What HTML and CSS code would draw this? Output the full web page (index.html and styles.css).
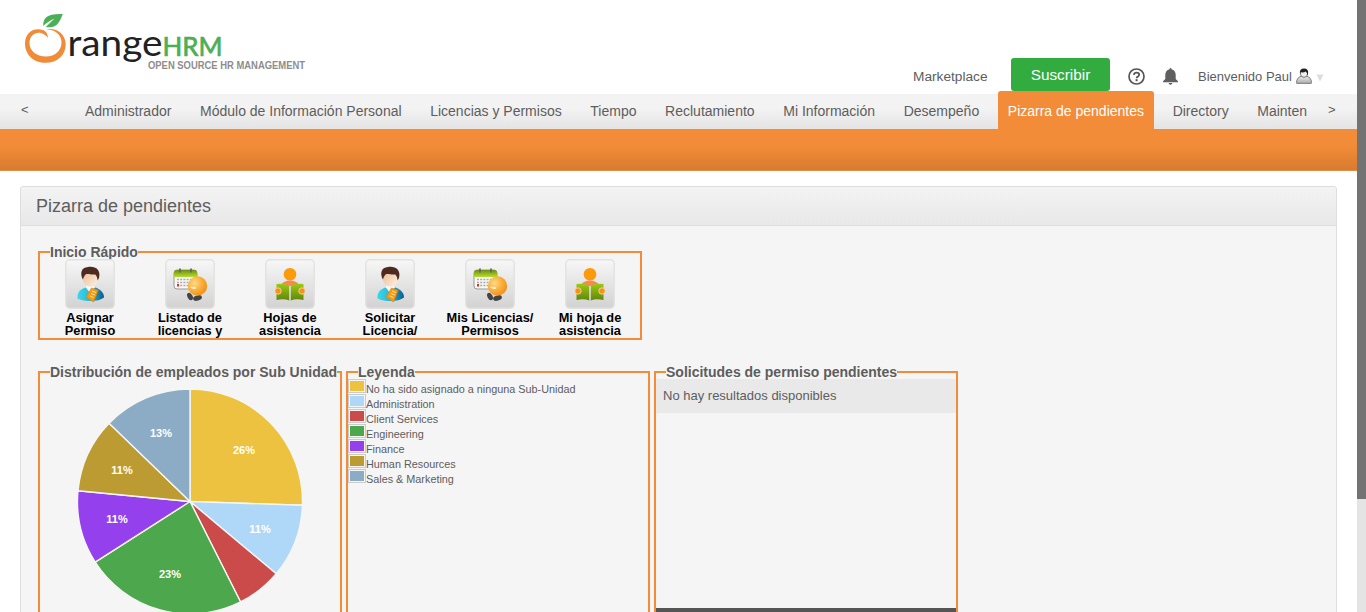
FILE: index.html
```html
<!DOCTYPE html>
<html lang="es">
<head>
<meta charset="utf-8">
<title>OrangeHRM</title>
<link rel="stylesheet" href="styles.css">
</head>
<body>
<svg width="0" height="0" class="defs" aria-hidden="true">
  <defs>
    <linearGradient id="tile" x1="0" y1="0" x2="0" y2="1"><stop offset="0" stop-color="#f7f7f7"/><stop offset="1" stop-color="#d2d2d2"/></linearGradient>
    <radialGradient id="ball" cx=".35" cy=".35" r=".75"><stop offset="0" stop-color="#ffd98c"/><stop offset=".5" stop-color="#fbb03b"/><stop offset="1" stop-color="#ee8a13"/></radialGradient>
    <linearGradient id="cal" x1="0" y1="0" x2="0" y2="1"><stop offset="0" stop-color="#6f8d10"/><stop offset="1" stop-color="#b5df2c"/></linearGradient>
    <linearGradient id="book" x1="0" y1="0" x2="0" y2="1"><stop offset="0" stop-color="#9cc914"/><stop offset="1" stop-color="#62850c"/></linearGradient>
    <linearGradient id="face" x1="0" y1="0" x2="1" y2="1"><stop offset="0" stop-color="#e9b58c"/><stop offset="1" stop-color="#fff3e6"/></linearGradient>
    <linearGradient id="shirt" x1="0" y1="0" x2="1" y2="0"><stop offset="0" stop-color="#38d8ec"/><stop offset=".5" stop-color="#2bb5d8"/><stop offset="1" stop-color="#0b5a8c"/></linearGradient>
    <linearGradient id="silver" x1="0" y1="0" x2="0" y2="1"><stop offset="0" stop-color="#eee"/><stop offset="1" stop-color="#aaa"/></linearGradient>
    <symbol id="i-person" viewBox="0 0 50 50">
      <rect x=".8" y=".8" width="48.4" height="48.4" rx="4" fill="url(#tile)" stroke="#e2e2dd" stroke-width="1.4"/>
      <path d="M12.500 39.500c-.5-6 2.500-9 8-11l10 0c5 2 8.500 5 8.500 10-3 2.500-8 3.500-13 3.500s-10-.5-13.500-2.500z" fill="url(#shirt)"/>
      <path d="M20.500 28l4.500 6 5-5.500-2.500-3h-5z" fill="#f4fafc"/>
      <ellipse cx="25.500" cy="19" rx="7.800" ry="8.800" fill="url(#face)"/>
      <path d="M17.800 20.500c-3-6-1.800-12 5.200-12.500 7-1.200 13.200 2.500 11 11l-1.400 2.500c-.3-3-.8-4.500-2.300-6-3.500.5-7-1-9-.500-1.500 1-2.300 2.500-3.500 5.500z" fill="#4e2a20"/>
      <path d="M26.500 29l6.800 2.300-4.800 11.700-7.500-5z" fill="#f59b12" stroke="#d97a0a" stroke-width=".6"/>
      <path d="M27 32l4 1.600m-5 .8l4 1.700m-5 .8l3.500 1.800" stroke="#ffe2a0" stroke-width="1"/>
    </symbol>
    <symbol id="i-calendar" viewBox="0 0 50 50">
      <rect x=".8" y=".8" width="48.400" height="48.400" rx="4" fill="url(#tile)" stroke="#e2e2dd" stroke-width="1.400"/>
      <rect x="9" y="11" width="23" height="19" rx="3" fill="#f8f8f6" stroke="#999" stroke-width="1"/>
      <path d="M9 18v-4q0-3 3-3h17q3 0 3 3v4z" fill="url(#cal)"/>
      <path d="M15 9.500v4m11-4v4" stroke="#666" stroke-width="1.800"/>
      <path d="M12 20.500h18M12 23.500h18M12 26.500h18" stroke="#aaa" stroke-width="1.700" stroke-dasharray="2 1.200"/>
      <rect x="12" y="25" width="2" height="2.500" fill="#d33"/>
      <ellipse cx="25" cy="37.500" rx="2.500" ry="4" transform="rotate(-28 25 37.500)" fill="#444"/>
      <ellipse cx="32.500" cy="39" rx="4.500" ry="2.600" transform="rotate(-15 32.500 39)" fill="#444"/>
      <circle cx="32.500" cy="27" r="9.700" fill="url(#ball)"/>
      <path d="M25 28q3 3 6 1.500l-.5-2q-2 1-5 0z" fill="#fff0cf"/>
    </symbol>
    <symbol id="i-reader" viewBox="0 0 50 50">
      <rect x=".8" y=".8" width="48.400" height="48.400" rx="4" fill="url(#tile)" stroke="#e2e2dd" stroke-width="1.400"/>
      <circle cx="25" cy="15.200" r="6.300" fill="#fb9b0c"/>
      <path d="M16.500 25q3-3.500 8.500-3.500t8.500 3.500l-8.500 2z" fill="#f58a4b"/>
      <path d="M11.500 25q7.500-1 12.700 1.500v15q-5-2-12.700-.5zM38.500 25q-7.500-1-12.700 1.500v15q5-2 12.700-.5z" fill="url(#book)"/>
      <circle cx="13" cy="32" r="3.200" fill="#fa930b" stroke="#e9e9e9" stroke-width=".7"/>
      <circle cx="37" cy="32" r="3.200" fill="#fa930b" stroke="#e9e9e9" stroke-width=".7"/>
    </symbol>
  </defs>
</svg>
<div class="viewport">
  <div class="page">
    <header class="branding">
      <svg class="logo" width="300" height="70" viewBox="20 10 300 70">
        <path d="M43 30C33 27 25 33 25 43.500C25 55 34 62.800 45.500 62.800C57.500 62.800 65.700 55 65.700 44.500C65.700 34 57 27.500 46.500 29.200C56 30 61.500 35 61.500 42.500C61.500 50.500 55 56.500 46 56.500C36.500 56.500 29.500 51 29.500 43C29.500 35 36 31.500 41 33C44.500 34.200 46.500 36 48 38C47.800 34 46.500 31.500 43 30Z" fill="#f28b38"/>
        <path d="M43.200 26C43.200 17.500 47 13.500 62.800 14C60 21 57.500 27.500 49 27.300Q47 27.300 45.800 27L54.500 18.500Q47 22 43.200 26Z" fill="#4caf55"/>
        <text class="logo-range" x="67.500" y="56" textLength="95" lengthAdjust="spacingAndGlyphs">range</text>
        <text class="logo-hrm" x="162.500" y="56" textLength="60" lengthAdjust="spacingAndGlyphs">HRM</text>
        <text class="logo-tag" x="148" y="68.800" textLength="157" lengthAdjust="spacingAndGlyphs">OPEN SOURCE HR MANAGEMENT</text>
      </svg>
      <div class="tools">
        <a class="market">Marketplace</a>
        <a class="subscribe">Suscribir</a>
        <svg class="help" width="17" height="17" viewBox="0 0 17 17"><circle cx="8.500" cy="8.500" r="7.500" fill="none" stroke="#555" stroke-width="1.700"/><path d="M5.900 6.900q.2-2.300 2.700-2.300t2.600 2q0 1.200-1.300 2-1.300.6-1.300 1.600" fill="none" stroke="#555" stroke-width="1.800"/><rect x="7.600" y="11.200" width="2" height="2" fill="#555"/></svg>
        <svg class="bell" width="15" height="17" viewBox="0 0 15 17"><path d="M7.500 0q1 0 1 1.200Q12.700 2.200 12.700 7v4L15 13.300v.9H0v-.9L2.300 11V7Q2.300 2.200 6.500 1.200 6.500 0 7.500 0zM5.500 15h4q-.4 1.800-2 1.800T5.500 15z" fill="#606060"/></svg>
        <a class="welcome">Bienvenido Paul</a>
        <svg class="user" width="16" height="16" viewBox="0 0 16 16"><path d="M.7 15.400v-2.900Q1.500 9.300 5.500 8h5q4 1.300 4.800 4.500v2.900z" fill="url(#silver)" stroke="#777" stroke-width=".9"/><circle cx="8" cy="5.700" r="3.600" fill="#eee" stroke="#555" stroke-width=".8"/><path d="M4 6Q3 .5 8 .5t4 5.500l-.6 1.500q0-3-1.700-4Q7 5 5 4z" fill="#222"/></svg>
        <svg class="caret" width="8" height="8" viewBox="0 0 8 8"><path d="M.5 .5h7L4 7.500z" fill="#ddd"/></svg>
      </div>
    </header>
    <nav class="menu">
      <span class="arrow prev">&lt;</span>
      <ul class="items">
        <li>Administrador</li><li>Módulo de Información Personal</li><li>Licencias y Permisos</li><li>Tiempo</li><li>Reclutamiento</li><li>Mi Información</li><li>Desempeño</li><li class="current">Pizarra de pendientes</li><li>Directory</li><li>Mainten</li>
      </ul>
      <span class="arrow next">&gt;</span>
    </nav>
    <div class="submenu"></div>
    <main class="box">
      <h1 class="title">Pizarra de pendientes</h1>
      <fieldset class="panel quick">
        <legend>Inicio Rápido</legend>
        <div class="launchers">
          <a class="launcher"><svg width="50" height="50"><use href="#i-person"/></svg><span>Asignar<br>Permiso</span></a>
          <a class="launcher"><svg width="50" height="50"><use href="#i-calendar"/></svg><span>Listado de<br>licencias y</span></a>
          <a class="launcher"><svg width="50" height="50"><use href="#i-reader"/></svg><span>Hojas de<br>asistencia</span></a>
          <a class="launcher"><svg width="50" height="50"><use href="#i-person"/></svg><span>Solicitar<br>Licencia/</span></a>
          <a class="launcher"><svg width="50" height="50"><use href="#i-calendar"/></svg><span>Mis Licencias/<br>Permisos</span></a>
          <a class="launcher"><svg width="50" height="50"><use href="#i-reader"/></svg><span>Mi hoja de<br>asistencia</span></a>
        </div>
      </fieldset>
      <div class="widgets">
        <fieldset class="panel">
          <legend>Distribución de empleados por Sub Unidad</legend>
          <svg class="pie" width="300" height="240" viewBox="40 379 300 240">
            <g stroke="#f6f6f4" stroke-width="1.400" stroke-linejoin="round">
              <path d="M190 501.500V389A112.500 112.500 0 0 1 302.440 505.260Z" fill="#edc240"/>
              <path d="M190 501.500L302.440 505.260A112.500 112.500 0 0 1 276.210 573.780Z" fill="#afd8f8"/>
              <path d="M190 501.500L276.210 573.780A112.500 112.500 0 0 1 240.610 601.970Z" fill="#cb4b4b"/>
              <path d="M190 501.500L240.610 601.970A112.500 112.500 0 0 1 95.200 562.070Z" fill="#4da74d"/>
              <path d="M190 501.500L95.200 562.070A112.500 112.500 0 0 1 78 490.800Z" fill="#9440ed"/>
              <path d="M190 501.500L78 490.800A112.500 112.500 0 0 1 109.100 423.300Z" fill="#bd9b33"/>
              <path d="M190 501.500L109.100 423.300A112.500 112.500 0 0 1 190 389Z" fill="#8cacc6"/>
            </g>
            <g class="pct"><text x="244" y="454">26%</text><text x="260" y="533">11%</text><text x="170" y="578">23%</text><text x="117" y="523">11%</text><text x="122" y="474">11%</text><text x="161" y="437">13%</text></g>
          </svg>
        </fieldset>
        <fieldset class="panel">
          <legend>Leyenda</legend>
          <ul class="key">
            <li><i class="c1"></i>No ha sido asignado a ninguna Sub-Unidad</li>
            <li><i class="c2"></i>Administration</li>
            <li><i class="c3"></i>Client Services</li>
            <li><i class="c4"></i>Engineering</li>
            <li><i class="c5"></i>Finance</li>
            <li><i class="c6"></i>Human Resources</li>
            <li><i class="c7"></i>Sales &amp; Marketing</li>
          </ul>
        </fieldset>
        <fieldset class="panel pending">
          <legend>Solicitudes de permiso pendientes</legend>
          <div class="row">No hay resultados disponibles</div>
          <div class="foot"></div>
        </fieldset>
      </div>
    </main>
  </div>
  <div class="track"><div class="thumb"></div></div>
</div>
</body>
</html>
```
FILE: styles.css
```css
* { box-sizing: border-box; }
body { margin: 0; overflow: hidden; font-family: "Liberation Sans", Arial, sans-serif; font-size: 14px; color: #5d5d5d; background: #fff; }
ul { list-style: none; margin: 0; padding: 0; }
svg { display: block; flex: none; }
.defs { position: absolute; }
.viewport { display: flex; width: 1366px; height: 612px; overflow: hidden; }
.page { width: 1357px; height: 612px; overflow: hidden; }
.track { width: 9px; background: #e4e4e4; }
.thumb { height: 499px; background: #737373; }

.branding { display: flex; justify-content: space-between; height: 94px; padding: 10px 33px 0 20px; }
.logo { overflow: visible; }
.logo-range { font: 37.500px Lato, sans-serif; fill: #222; }
.logo-hrm { font: 26.500px Lato, sans-serif; fill: #4caf55; stroke: #4caf55; stroke-width: .7px; }
.logo-tag { font: bold 10px "Liberation Sans", Arial, sans-serif; fill: #8d8d8d; }
.tools { display: flex; align-items: center; height: 33px; margin-top: 48px; }
.market { width: 98px; padding-top: 3px; font-size: 13.700px; white-space: nowrap; }
.subscribe { width: 99px; height: 33px; line-height: 33px; border-radius: 3px; background: #32ab3f; color: #fff; font-size: 15.300px; text-align: center; }
.help { margin: 4px 0 0 18px; }
.bell { margin: 3px 0 0 18px; }
.welcome { width: 98px; margin-left: 20px; padding-top: 3px; font-size: 13px; white-space: nowrap; }
.user { margin-top: 2px; }
.caret { margin: 6px 0 0 4px; }

.menu { display: flex; height: 35px; background: linear-gradient(#f3f3f3 40%, #e4e4e4); line-height: 35px; }
.arrow { font-size: 13px; line-height: 32px; }
.prev { width: 75px; padding-left: 21px; }
.items { display: flex; gap: 8.640px; width: 1253px; white-space: nowrap; }
.items li { padding: 0 10px; }
.items .current { height: 38px; margin-top: -3px; padding-top: 3px; border-radius: 3px 3px 0 0; background: #f38c38; color: #fff; }
.submenu { height: 42px; background: linear-gradient(#f38c38 40%, #d87b30); border-bottom: 1px solid #df8e4b; }

.box { width: 1317px; height: 480px; margin: 15px 0 0 20px; border: 1px solid #dedede; border-radius: 3px 3px 0 0; background: #f5f5f5; }
.title { height: 39px; margin: 0 0 19px; padding-left: 15px; border-bottom: 1px solid #dedede; border-radius: 3px 3px 0 0; background: linear-gradient(#f3f3f3, #e8e8e8); font-size: 18px; font-weight: normal; line-height: 38px; }
.panel { width: 304px; height: 300px; min-width: 0; margin: 0; padding: 0; border: 2px solid #f28c38; }
.panel legend { height: 14px; margin-left: 10px; padding: 0; font-weight: bold; line-height: 14px; white-space: nowrap; }
.quick { width: 604px; height: 95px; margin: 0 0 25px 17px; }
.launchers { display: flex; }
.launcher { display: flex; flex-direction: column; align-items: center; width: 100px; color: #000; font-size: 12.800px; font-weight: bold; line-height: 13px; text-align: center; white-space: nowrap; }
.launcher span { margin-top: 2px; }
.widgets { display: flex; gap: 4px; margin-left: 17px; }
.pct { font: bold 11px "Liberation Sans", Arial, sans-serif; fill: #fff; text-anchor: middle; }
.key { font-size: 10.830px; }
.key li { display: flex; height: 15px; line-height: 20px; white-space: nowrap; }
.key i { width: 18px; height: 14px; padding: 1px; border: 1px solid #ccc; }
.c1 { background: #edc240; } .c2 { background: #afd8f8; } .c3 { background: #cb4b4b; } .c4 { background: #4da74d; }
.c5 { background: #9440ed; } .c6 { background: #bd9b33; } .c7 { background: #8cacc6; }
.key i[class] { background-clip: content-box; }
.row { height: 34px; padding-left: 7px; background: #e9e9e9; font-size: 13px; line-height: 33px; }
.foot { height: 20px; margin-top: 195px; background: #555; }
```
